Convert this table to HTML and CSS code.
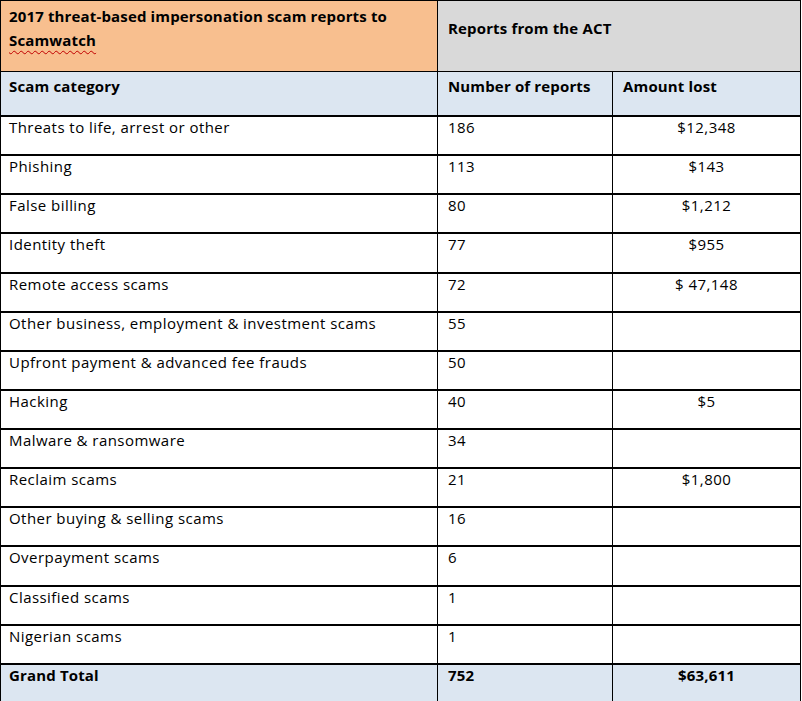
FILE: index.html
```html
<!DOCTYPE html>
<html lang="en">
<head>
<meta charset="utf-8">
<title>2017 threat-based impersonation scam reports to Scamwatch</title>
<link rel="stylesheet" href="styles.css">
</head>
<body>
<table class="scams">
  <colgroup>
    <col class="c-cat">
    <col class="c-num">
    <col class="c-amt">
  </colgroup>
  <thead>
    <tr class="title-row">
      <th class="title">2017 threat-based impersonation scam reports to <span class="spell">Scamwatch</span></th>
      <th class="region" colspan="2">Reports from the ACT</th>
    </tr>
    <tr class="head-row">
      <th>Scam category</th>
      <th>Number of reports</th>
      <th>Amount lost</th>
    </tr>
  </thead>
  <tbody>
    <tr><td>Threats to life, arrest or other</td><td>186</td><td class="amt">$12,348</td></tr>
    <tr><td>Phishing</td><td>113</td><td class="amt">$143</td></tr>
    <tr><td>False billing</td><td>80</td><td class="amt">$1,212</td></tr>
    <tr><td>Identity theft</td><td>77</td><td class="amt">$955</td></tr>
    <tr><td>Remote access scams</td><td>72</td><td class="amt">$ 47,148</td></tr>
    <tr><td>Other business, employment &amp; investment scams</td><td>55</td><td class="amt"></td></tr>
    <tr><td>Upfront payment &amp; advanced fee frauds</td><td>50</td><td class="amt"></td></tr>
    <tr><td>Hacking</td><td>40</td><td class="amt">$5</td></tr>
    <tr><td>Malware &amp; ransomware</td><td>34</td><td class="amt"></td></tr>
    <tr><td>Reclaim scams</td><td>21</td><td class="amt">$1,800</td></tr>
    <tr><td>Other buying &amp; selling scams</td><td>16</td><td class="amt"></td></tr>
    <tr><td>Overpayment scams</td><td>6</td><td class="amt"></td></tr>
    <tr><td>Classified scams</td><td>1</td><td class="amt"></td></tr>
    <tr><td>Nigerian scams</td><td>1</td><td class="amt"></td></tr>
  </tbody>
  <tfoot>
    <tr class="total-row"><th>Grand Total</th><th>752</th><th class="amt">$63,611</th></tr>
  </tfoot>
</table>
</body>
</html>
```

FILE: styles.css
```css
html, body {
  margin: 0;
  padding: 0;
  overflow: hidden;
  background: #ffffff;
}

.scams {
  border-collapse: separate;
  border-spacing: 0;
  table-layout: fixed;
  width: 801px;
  font-family: "Open Sans", "Liberation Sans", sans-serif;
  font-size: 15px;
  letter-spacing: 0.45px;
  color: #000;
}

.c-cat { width: 438px; }
.c-num { width: 175px; }
.c-amt { width: 188px; }

.scams th,
.scams td {
  box-sizing: border-box;
  text-align: left;
  vertical-align: top;
  border-right: 1px solid #000;
  border-top: 2px solid #000;
  padding: 0 8px 0 10px;
  line-height: 20px;
  height: 39.14px;
  font-weight: normal;
}

.scams th:first-child,
.scams td:first-child {
  border-left: 1px solid #000;
  padding-left: 8px;
}

.scams th {
  font-weight: bold;
  letter-spacing: 0.15px;
}

.title-row th {
  border-top: 1px solid #000;
  height: 71px;
  padding-top: 3px;
  line-height: 24px;
}

.title-row .title { background: #f8bf8f; }
.title-row .region {
  background: #d9d9d9;
  padding-top: 15px;
}

.head-row th {
  border-top: 1px solid #000;
  height: 44px;
  padding-top: 4px;
  background: #dce6f1;
}

.total-row th {
  background: #dce6f1;
}

.scams .amt {
  text-align: center;
  padding-left: 8px;
}

.spell {
  text-decoration: underline wavy #c00000;
  text-decoration-thickness: 1px;
  text-underline-offset: 4px;
}
```
